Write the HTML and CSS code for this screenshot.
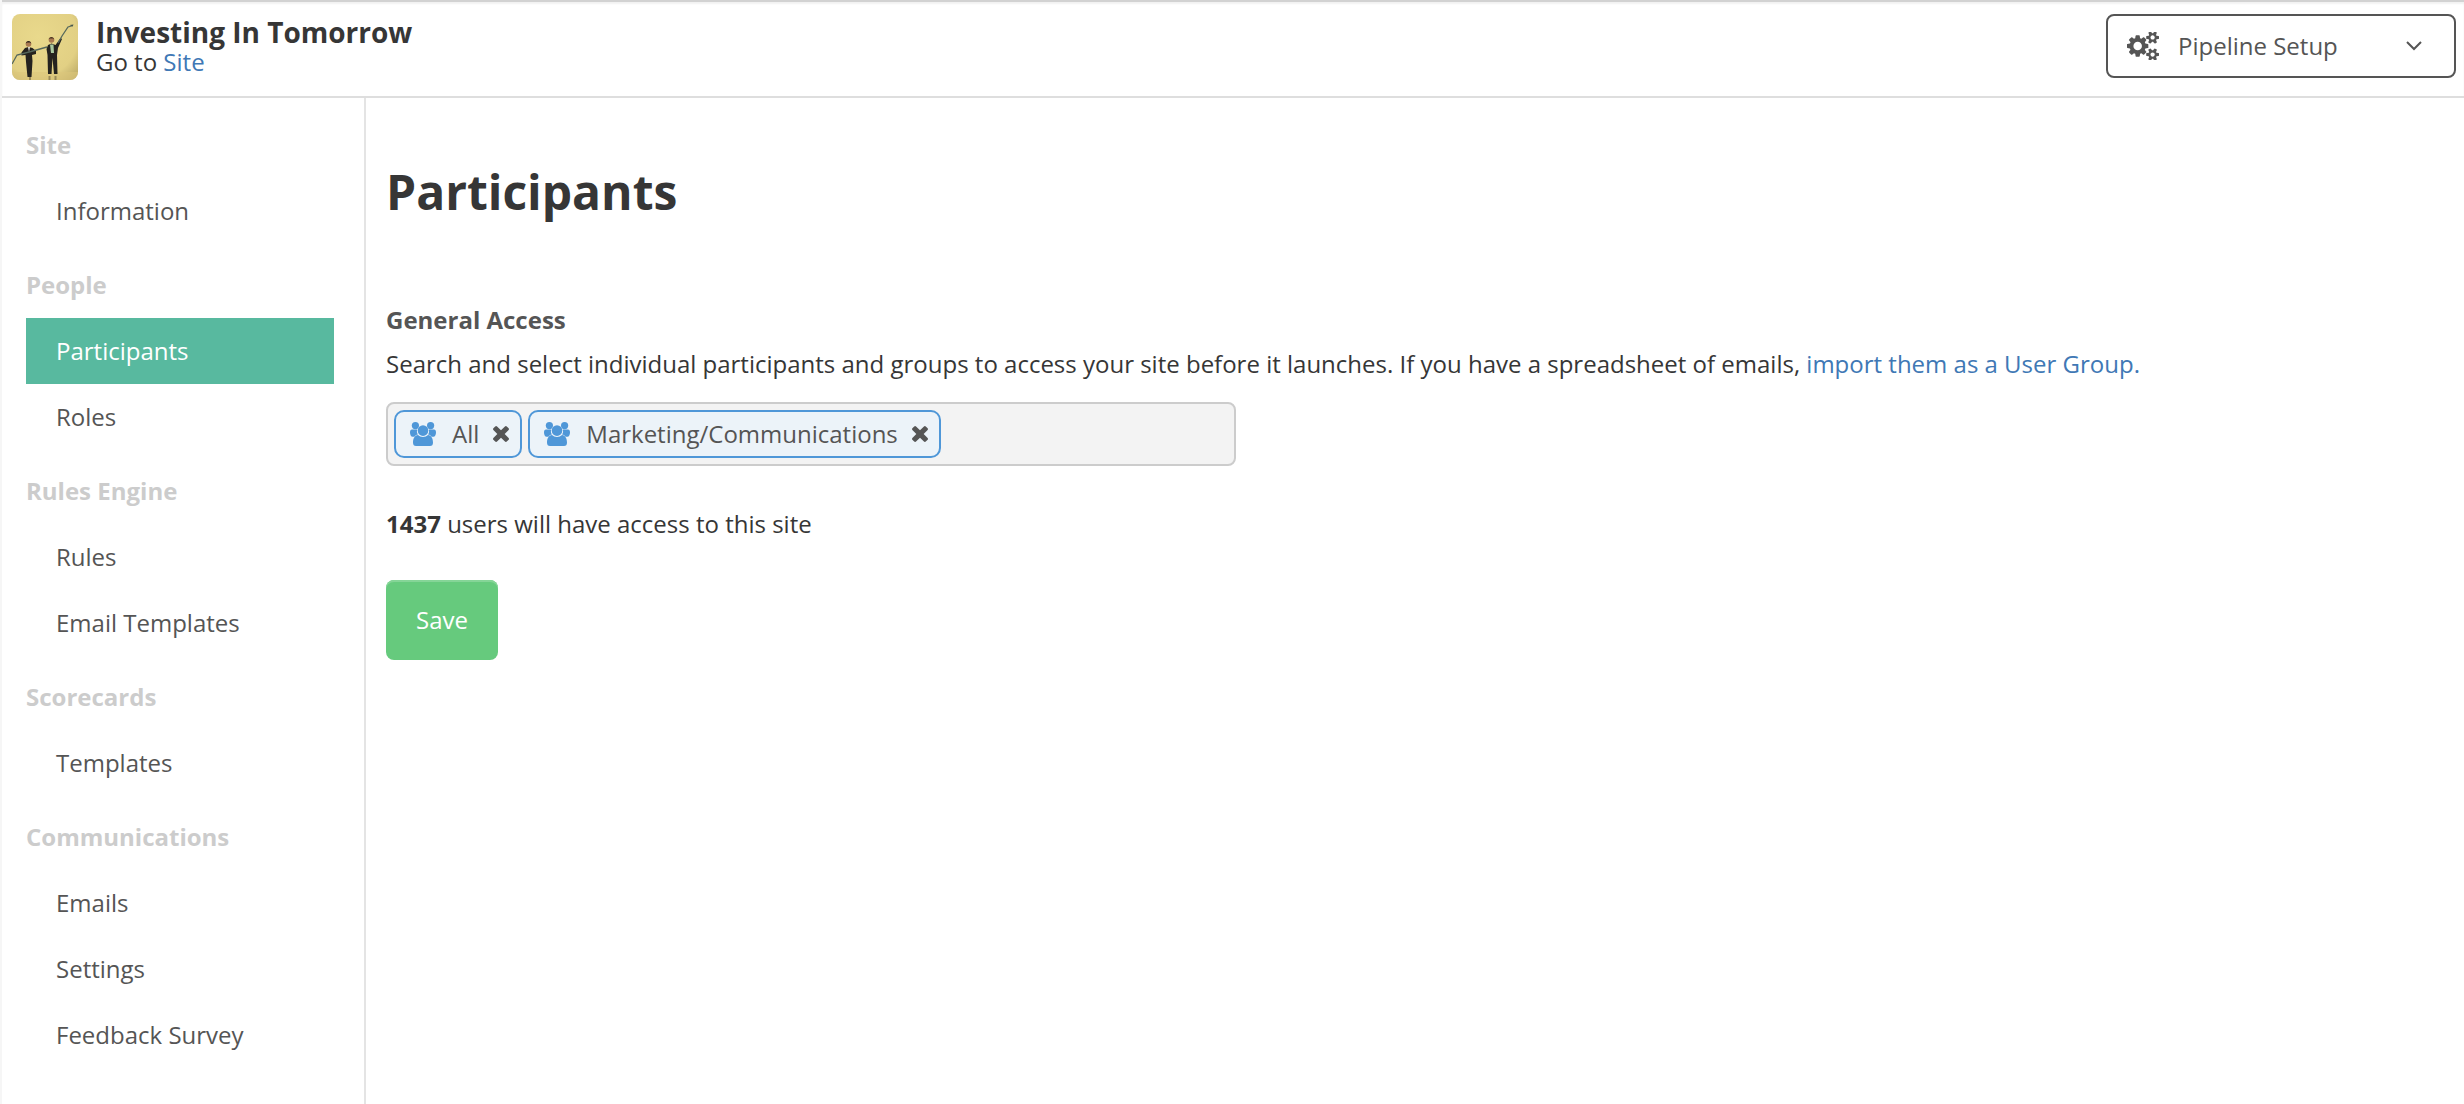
FILE: index.html
```html
<!DOCTYPE html>
<html lang="en">
<head>
  <meta charset="UTF-8">
  <meta name="viewport" content="width=device-width, initial-scale=1.0">
  <title>Participants - Investing In Tomorrow</title>
  <link rel="stylesheet" href="styles.css">
</head>
<body>
  <!-- shared icons -->
  <svg class="sprite" aria-hidden="true">
    <symbol id="icon-group" viewBox="0 0 26 24">
      <circle cx="5.4" cy="3.6" r="3.6"/>
      <circle cx="20.6" cy="3.6" r="3.6"/>
      <path d="M2 7.400h5.200c-.6 2.200-.2 3.800.8 5.200-1.800.3-2.800 1-3.600 2.200H2.600C1 14.800 0 12.500 0 10.400 0 8.600.7 7.400 2 7.400z"/>
      <path d="M24 7.400h-5.200c.6 2.200.2 3.800-.8 5.200 1.800.3 2.800 1 3.600 2.200h1.800c1.600 0 2.600-2.300 2.600-4.400 0-1.800-.7-3-2-3z"/>
      <circle cx="13" cy="8.600" r="5.300"/>
      <path d="M8 12.900c1.300 1.300 3 2 5 2s3.700-.7 5-2c3.400.2 5 3.600 5 7.600 0 2.400-1 3.500-3 3.500H6c-2 0-3-1.100-3-3.500 0-4 1.600-7.400 5-7.600z"/>
    </symbol>
    <symbol id="icon-times" viewBox="302 366 1188 1188">
      <path d="M1490 1322q0 40-28 68l-136 136q-28 28-68 28t-68-28l-294-294-294 294q-28 28-68 28t-68-28l-136-136q-28-28-28-68t28-68l294-294-294-294q-28-28-28-68t28-68l136-136q28-28 68-28t68 28l294 294 294-294q28-28 68-28t68 28l136 136q28 28 28 68t-28 68l-294 294 294 294q28 28 28 68z"/>
    </symbol>
  </svg>

  <header class="header">
    <svg class="logo" viewBox="0 0 66 66" aria-hidden="true">
      <defs>
        <radialGradient id="logo-bg" cx="0.4" cy="0.35" r="0.85">
          <stop offset="0" stop-color="#e9d98c"/>
          <stop offset="0.7" stop-color="#e2d084"/>
          <stop offset="1" stop-color="#b9a765"/>
        </radialGradient>
      </defs>
      <rect width="66" height="66" fill="url(#logo-bg)"/>
      <rect y="58" width="66" height="8" fill="#dcc67c" opacity="0.6"/>
      <!-- left man -->
      <circle cx="16.500" cy="30" r="2.800" fill="#a87850"/>
      <path d="M13.800 29.500c0-3.500 5.400-3.500 5.400 0l-1-1h-3.400z" fill="#2a2119"/>
      <path d="M13 34l3.500-1 4 1 3.500 3v3l-4 1 .5 6-1 16h-4l-1.500-15-.5-7-4 .5v-3z" fill="#25231f"/>
      <path d="M16 33l1 5 1-5z" fill="#e8e4d8"/>
      <!-- right man -->
      <circle cx="39.500" cy="26" r="2.800" fill="#a87850"/>
      <path d="M36.700 25.500c0-3.500 5.400-3.500 5.400 0l-1-1h-3.400z" fill="#4a3420"/>
      <path d="M36 31l3.500-1.500 4 1.500 5-7 1.500 1-4 9-1 7 .5 19h-3.500l-1.500-16-1 16H36l-.5-19-1-6z" fill="#25231f"/>
      <path d="M38 30.500l3.500 0 .5 8.500h-3z" fill="#a9c9a0"/>
      <path d="M37.500 62v4M43.500 62v4M18 63v3" stroke="#6e6342" stroke-width="2" opacity="0.6"/>
      <!-- chart line held by both -->
      <path d="M0 50l5-9 14-3.500 16-4.500" fill="none" stroke="#56685c" stroke-width="1.300"/>
      <path d="M46 29l4-7 6-9 5-1.500" fill="none" stroke="#56685c" stroke-width="1.300"/>
      <path d="M57.500 11l4-.5-1 2z" fill="#46564c"/>
    </svg>
    <div class="site-info">
      <strong class="site-name">Investing In Tomorrow</strong>
      <span>Go to <a href="#">Site</a></span>
    </div>
    <div class="setup">
      <svg class="setup-icon" viewBox="0 -166 1920 1612" aria-hidden="true">
        <path d="M896 640q0-106-75-181t-181-75-181 75-75 181 75 181 181 75 181-75 75-181zm768 512q0-52-38-90t-90-38-90 38-38 90q0 53 37.500 90.500t90.500 37.500 90.500-37.500 37.500-90.500zm0-1024q0-52-38-90t-90-38-90 38-38 90q0 53 37.500 90.500t90.500 37.500 90.500-37.500 37.500-90.500zm-384 421v185q0 10-7 19.500t-16 10.500l-155 24q-11 35-32 76 34 48 90 115 7 11 7 20 0 12-7 19-23 30-82.500 89.500t-78.500 59.500q-11 0-21-7l-115-90q-37 19-77 31-11 108-23 155-7 24-30 24h-186q-11 0-20-7.500t-10-17.500l-23-153q-34-10-75-31l-118 89q-7 7-20 7-11 0-21-8-144-133-144-160 0-9 7-19 10-14 41-53t47-61q-23-44-35-82l-152-24q-10-1-17-9.500t-7-19.500v-185q0-10 7-19.500t16-10.500l155-24q11-35 32-76-34-48-90-115-7-11-7-20 0-12 7-20 22-30 82-89t79-59q11 0 21 7l115 90q34-18 77-32 11-108 23-154 7-24 30-24h186q11 0 20 7.500t10 17.500l23 153q34 10 75 31l118-89q8-7 20-7 11 0 21 8 144 133 144 160 0 8-7 19-12 16-42 54t-45 60q23 48 34 82l152 23q10 2 17 10.500t7 19.500zm640 533v140q0 16-149 31-12 27-30 52 51 113 51 138 0 4-4 7-122 71-124 71-8 0-46-47t-52-68q-20 2-30 2t-30-2q-14 21-52 68t-46 47q-2 0-124-71-4-3-4-7 0-25 51-138-18-25-30-52-149-15-149-31v-140q0-16 149-31 13-29 30-52-51-113-51-138 0-4 4-7 4-2 35-20t59-34 30-16q8 0 46 46.500t52 67.500q20-2 30-2t30 2q51-71 92-112l6-2q4 0 124 70 4 3 4 7 0 25-51 138 17 23 30 52 149 15 149 31zm0-1024v140q0 16-149 31-12 27-30 52 51 113 51 138 0 4-4 7-122 71-124 71-8 0-46-47t-52-68q-20 2-30 2t-30-2q-14 21-52 68t-46 47q-2 0-124-71-4-3-4-7 0-25 51-138-18-25-30-52-149-15-149-31v-140q0-16 149-31 13-29 30-52-51-113-51-138 0-4 4-7 4-2 35-20t59-34 30-16q8 0 46 46.500t52 67.500q20-2 30-2t30 2q51-71 92-112l6-2q4 0 124 70 4 3 4 7 0 25-51 138 17 23 30 52 149 15 149 31z"/>
      </svg>
      <select class="setup-select" aria-label="Section">
        <option>Pipeline Setup</option>
      </select>
      <svg class="setup-arrow" viewBox="0 0 16 10" aria-hidden="true">
        <path d="M1 1l7 7 7-7"/>
      </svg>
    </div>
  </header>

  <div class="layout">
    <nav class="sidebar">
      <h2>Site</h2>
      <ul>
        <li><a href="#">Information</a></li>
      </ul>
      <h2>People</h2>
      <ul>
        <li><a href="#" class="active">Participants</a></li>
        <li><a href="#">Roles</a></li>
      </ul>
      <h2>Rules Engine</h2>
      <ul>
        <li><a href="#">Rules</a></li>
        <li><a href="#">Email Templates</a></li>
      </ul>
      <h2>Scorecards</h2>
      <ul>
        <li><a href="#">Templates</a></li>
      </ul>
      <h2>Communications</h2>
      <ul>
        <li><a href="#">Emails</a></li>
        <li><a href="#">Settings</a></li>
        <li><a href="#">Feedback Survey</a></li>
      </ul>
    </nav>

    <main class="content">
      <h1>Participants</h1>
      <form>
        <label class="field-label" for="access">General Access</label>
        <p class="help">Search and select individual participants and groups to access your site before it launches. If you have a spreadsheet of emails, <a href="#">import them as a User Group.</a></p>
        <div class="token-field">
          <span class="token">
            <svg class="token-icon" aria-hidden="true"><use href="#icon-group"/></svg>
            All
            <button type="button" class="token-remove" aria-label="Remove All"><svg><use href="#icon-times"/></svg></button>
          </span>
          <span class="token">
            <svg class="token-icon" aria-hidden="true"><use href="#icon-group"/></svg>
            Marketing/Communications
            <button type="button" class="token-remove" aria-label="Remove Marketing/Communications"><svg><use href="#icon-times"/></svg></button>
          </span>
          <input type="text" id="access" class="token-input">
        </div>
        <p class="user-count"><strong>1437</strong> users will have access to this site</p>
        <button type="submit" class="save">Save</button>
      </form>
    </main>
  </div>
</body>
</html>
```

FILE: styles.css
```css
* {
  box-sizing: border-box;
}

body {
  margin: 0;
  min-height: 100vh;
  display: flex;
  flex-direction: column;
  font-family: 'Open Sans', 'Noto Sans', sans-serif;
  font-size: 24px;
  line-height: 36px;
  color: #363636;
  background-color: #fff;
  border-left: 2px solid #f6f6f6;
}

a {
  color: #4078b5;
  text-decoration: none;
}

h1, h2, p, ul {
  margin: 0;
  padding: 0;
}

button, input, select {
  font: inherit;
  color: inherit;
}

.sprite {
  display: none;
}

/* header */
.header {
  display: flex;
  align-items: center;
  gap: 18px;
  padding: 12px 8px 16px 10px;
  border-top: 2px solid #d2d2d2;
  border-bottom: 2px solid #dedede;
  box-shadow: inset 0 2px 2px #f2f2f2;
}

.logo {
  width: 66px;
  height: 66px;
  border-radius: 8px;
}

.site-info {
  display: flex;
  flex-direction: column;
  line-height: 30px;
}

.site-name {
  font-size: 28px;
}

.setup {
  display: grid;
  grid-template-columns: 72px 1fr 48px;
  align-items: center;
  align-self: flex-start;
  width: 350px;
  height: 64px;
  margin-left: auto;
  border: 2px solid #555;
  border-radius: 8px;
  color: #555;
}

.setup-select {
  grid-area: 1 / 1 / 2 / 4;
  height: 100%;
  padding: 0 48px 0 70px;
  border: 0;
  background: transparent;
  appearance: none;
  cursor: pointer;
}

.setup-icon {
  grid-area: 1 / 1;
  width: 32px;
  height: 28px;
  margin-left: 19px;
  fill: #555;
  pointer-events: none;
}

.setup-arrow {
  grid-area: 1 / 3;
  width: 16px;
  height: 10px;
  fill: none;
  stroke: #555;
  stroke-width: 2;
  pointer-events: none;
}

/* page */
.layout {
  display: flex;
  flex: 1;
}

.sidebar {
  flex: none;
  width: 364px;
  padding: 14px 30px 28px 24px;
  border-right: 2px solid #e4e4e4;
}

.sidebar h2 {
  padding: 15px 0;
  font-size: 24px;
  color: #ccc;
}

.sidebar ul {
  margin-bottom: 8px;
  list-style: none;
}

.sidebar a {
  display: block;
  padding: 15px 30px;
  color: #555;
}

.sidebar .active {
  color: #fff;
  background-color: #58b99f;
}

.content {
  flex: 1;
  padding: 60px 20px;
}

.content h1 {
  margin-bottom: 76px;
  font-size: 48px;
  line-height: 68px;
}

.field-label {
  display: block;
  margin-bottom: 8px;
  font-weight: bold;
  color: #555;
}

.token-field {
  display: flex;
  flex-wrap: wrap;
  gap: 6px;
  max-width: 850px;
  margin: 20px 0 40px;
  padding: 6px;
  border: 2px solid #ccc;
  border-radius: 8px;
  background-color: #f3f3f3;
}

.token {
  display: flex;
  align-items: center;
  height: 48px;
  padding: 0 11px 0 14px;
  border: 2px solid #4f97d8;
  border-radius: 10px;
  background-color: #ecf3f9;
  color: #555;
}

.token-icon {
  width: 26px;
  height: 24px;
  margin-right: 16px;
  fill: #4f97d8;
}

.token-remove {
  display: flex;
  margin-left: 14px;
  padding: 0;
  border: 0;
  background: none;
  cursor: pointer;
}

.token-remove svg {
  width: 16px;
  height: 16px;
  fill: #555;
}

.token-input {
  flex: 1;
  min-width: 60px;
  border: 0;
  outline: 0;
  background: transparent;
}

.save {
  margin-top: 38px;
  padding: 22px 30px;
  border: 0;
  border-radius: 8px;
  background-color: #66ca7d;
  box-shadow: inset 0 2px 0 #85d597;
  color: #fff;
  cursor: pointer;
}
```
